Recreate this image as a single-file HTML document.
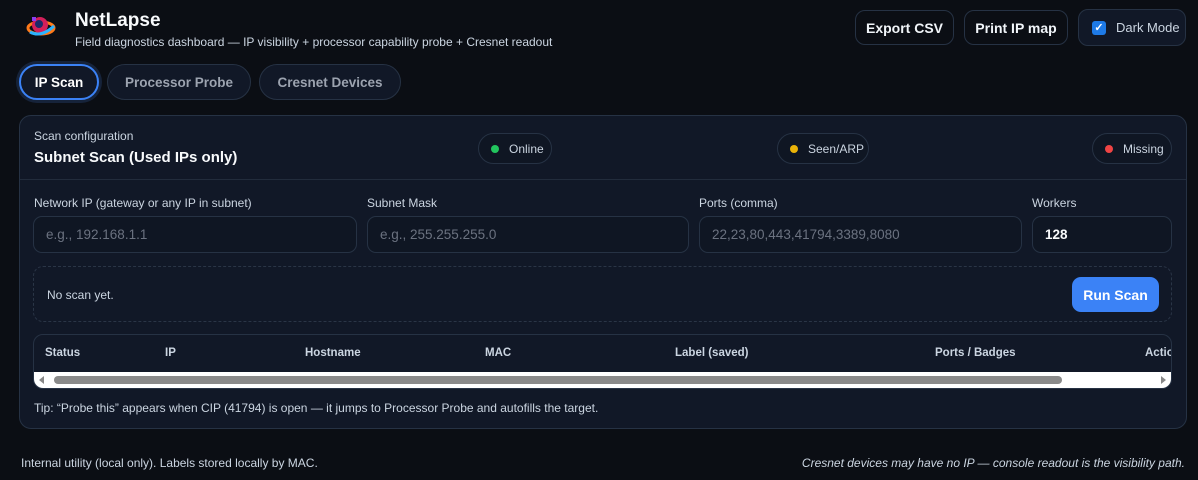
<!DOCTYPE html>
<html><head><meta charset="utf-8"><style>
*{box-sizing:border-box;margin:0;padding:0}
body{width:1198px;height:480px;background:#0b0e14;font-family:"Liberation Sans",sans-serif;color:#e5e7eb;position:relative;overflow:hidden}
.a{position:absolute}
.btn{position:absolute;border:1px solid #263244;border-radius:10px;background:#0b0e14;color:#f1f5f9;font-weight:bold;font-size:14px;display:flex;align-items:center;justify-content:center}
.tab{position:absolute;top:64px;height:36px;border:1px solid #263244;border-radius:18px;background:#111827;color:#9ca3af;font-weight:bold;font-size:13.5px;display:flex;align-items:center;justify-content:center}
.pill{position:absolute;top:133px;height:31px;border:1px solid #263244;border-radius:16px;background:#0f1623;color:#cbd5e1;font-size:12px;display:flex;align-items:center;padding-left:12px}
.pill i{width:8px;height:8px;border-radius:50%;display:inline-block;margin-right:10px}
.lbl{position:absolute;top:196px;font-size:12px;color:#cbd5e1}
.inp{position:absolute;top:216px;height:37px;border:1px solid #263244;border-radius:9px;background:#0f1623;font-size:13.5px;color:#6b7280;padding-left:12px;display:flex;align-items:center}
.th{position:absolute;top:347px;font-size:11.5px;font-weight:bold;color:#cbd5e1}
</style></head><body>
<svg class="a" style="left:24px;top:12px" width="34" height="28" viewBox="0 0 34 28">
<ellipse cx="17" cy="16" rx="13" ry="6" fill="none" stroke="#ff7a1a" stroke-width="3"/>
<circle cx="16" cy="13" r="8" fill="#d21f5a"/><circle cx="15" cy="12" r="4" fill="#1a2a6a"/>
<path d="M6 20 Q17 26 30 14" stroke="#2bb3ff" stroke-width="3" fill="none"/>
<rect x="8" y="5" width="4" height="4" fill="#8b3cf0"/></svg>
<div class="a" style="left:75px;top:10px;font-size:19px;font-weight:bold;color:#f8fafc">NetLapse</div>
<div class="a" style="left:75px;top:35px;font-size:12px;color:#cbd5e1">Field diagnostics dashboard — IP visibility + processor capability probe + Cresnet readout</div>
<div class="btn" style="left:855px;top:10px;width:99px;height:35px">Export CSV</div>
<div class="btn" style="left:964px;top:10px;width:104px;height:35px">Print IP map</div>
<div class="btn" style="left:1078px;top:9px;width:108px;height:37px;background:#111827;font-weight:normal;font-size:13px;color:#cbd5e1;justify-content:flex-start;padding-left:13px">
<span style="width:14px;height:14px;background:#1e7ae6;border-radius:3px;margin-right:10px;display:inline-flex;align-items:center;justify-content:center;color:#fff;font-size:11px;font-weight:bold">✓</span>Dark Mode</div>
<div class="tab" style="left:19px;width:80px;color:#fff;border:2px solid #3b82f6;box-shadow:0 0 0 3px #16233a">IP Scan</div>
<div class="tab" style="left:107px;width:144px">Processor Probe</div>
<div class="tab" style="left:259px;width:142px">Cresnet Devices</div>
<div class="a" style="left:19px;top:115px;width:1168px;height:314px;background:#111827;border:1px solid #263244;border-radius:12px"></div>
<div class="a" style="left:20px;top:179px;width:1166px;height:1px;background:#222c3c"></div>
<div class="a" style="left:34px;top:129px;font-size:12px;color:#cbd5e1">Scan configuration</div>
<div class="a" style="left:34px;top:149px;font-size:15px;font-weight:bold;color:#f8fafc">Subnet Scan (Used IPs only)</div>
<div class="pill" style="left:478px;width:74px"><i style="background:#22c55e"></i>Online</div>
<div class="pill" style="left:777px;width:92px"><i style="background:#eab308"></i>Seen/ARP</div>
<div class="pill" style="left:1092px;width:80px"><i style="background:#ef4444"></i>Missing</div>
<div class="lbl" style="left:34px">Network IP (gateway or any IP in subnet)</div>
<div class="lbl" style="left:367px">Subnet Mask</div>
<div class="lbl" style="left:699px">Ports (comma)</div>
<div class="lbl" style="left:1032px">Workers</div>
<div class="inp" style="left:33px;width:324px">e.g., 192.168.1.1</div>
<div class="inp" style="left:367px;width:322px">e.g., 255.255.255.0</div>
<div class="inp" style="left:699px;width:323px">22,23,80,443,41794,3389,8080</div>
<div class="inp" style="left:1032px;width:140px;color:#f8fafc;font-weight:bold">128</div>
<div class="a" style="left:33px;top:266px;width:1139px;height:56px;border:1px dashed #2a3546;border-radius:10px"></div>
<div class="a" style="left:47px;top:288px;font-size:12px;color:#cbd5e1">No scan yet.</div>
<div class="a" style="left:1072px;top:277px;width:87px;height:35px;background:#3b82f6;border-radius:9px;color:#fff;font-weight:bold;font-size:14px;display:flex;align-items:center;justify-content:center">Run Scan</div>
<div class="a" style="left:33px;top:334px;width:1139px;height:55px;border:1px solid #263244;border-radius:10px;overflow:hidden">
<div class="a" style="left:0;top:37px;width:1139px;height:16px;background:#fff"></div>
<div class="a" style="left:20px;top:41px;width:1008px;height:8px;background:#8a8a8a;border-radius:4px"></div>
<div class="a" style="left:5px;top:41px;width:0;height:0;border-top:4px solid transparent;border-bottom:4px solid transparent;border-right:5px solid #888"></div>
<div class="a" style="left:1127px;top:41px;width:0;height:0;border-top:4px solid transparent;border-bottom:4px solid transparent;border-left:5px solid #888"></div>
</div>
<div class="th" style="left:45px">Status</div>
<div class="th" style="left:165px">IP</div>
<div class="th" style="left:305px">Hostname</div>
<div class="th" style="left:485px">MAC</div>
<div class="th" style="left:675px">Label (saved)</div>
<div class="th" style="left:935px">Ports / Badges</div>
<div class="th" style="left:1145px;width:26px;overflow:hidden;white-space:nowrap">Actions</div>
<div class="a" style="left:34px;top:401px;font-size:12px;color:#cbd5e1">Tip: “Probe this” appears when CIP (41794) is open — it jumps to Processor Probe and autofills the target.</div>
<div class="a" style="left:21px;top:456px;font-size:12px;color:#cbd5e1">Internal utility (local only). Labels stored locally by MAC.</div>
<div class="a" style="right:13px;top:456px;font-size:12px;color:#cbd5e1;font-style:italic">Cresnet devices may have no IP — console readout is the visibility path.</div>
</body></html>
